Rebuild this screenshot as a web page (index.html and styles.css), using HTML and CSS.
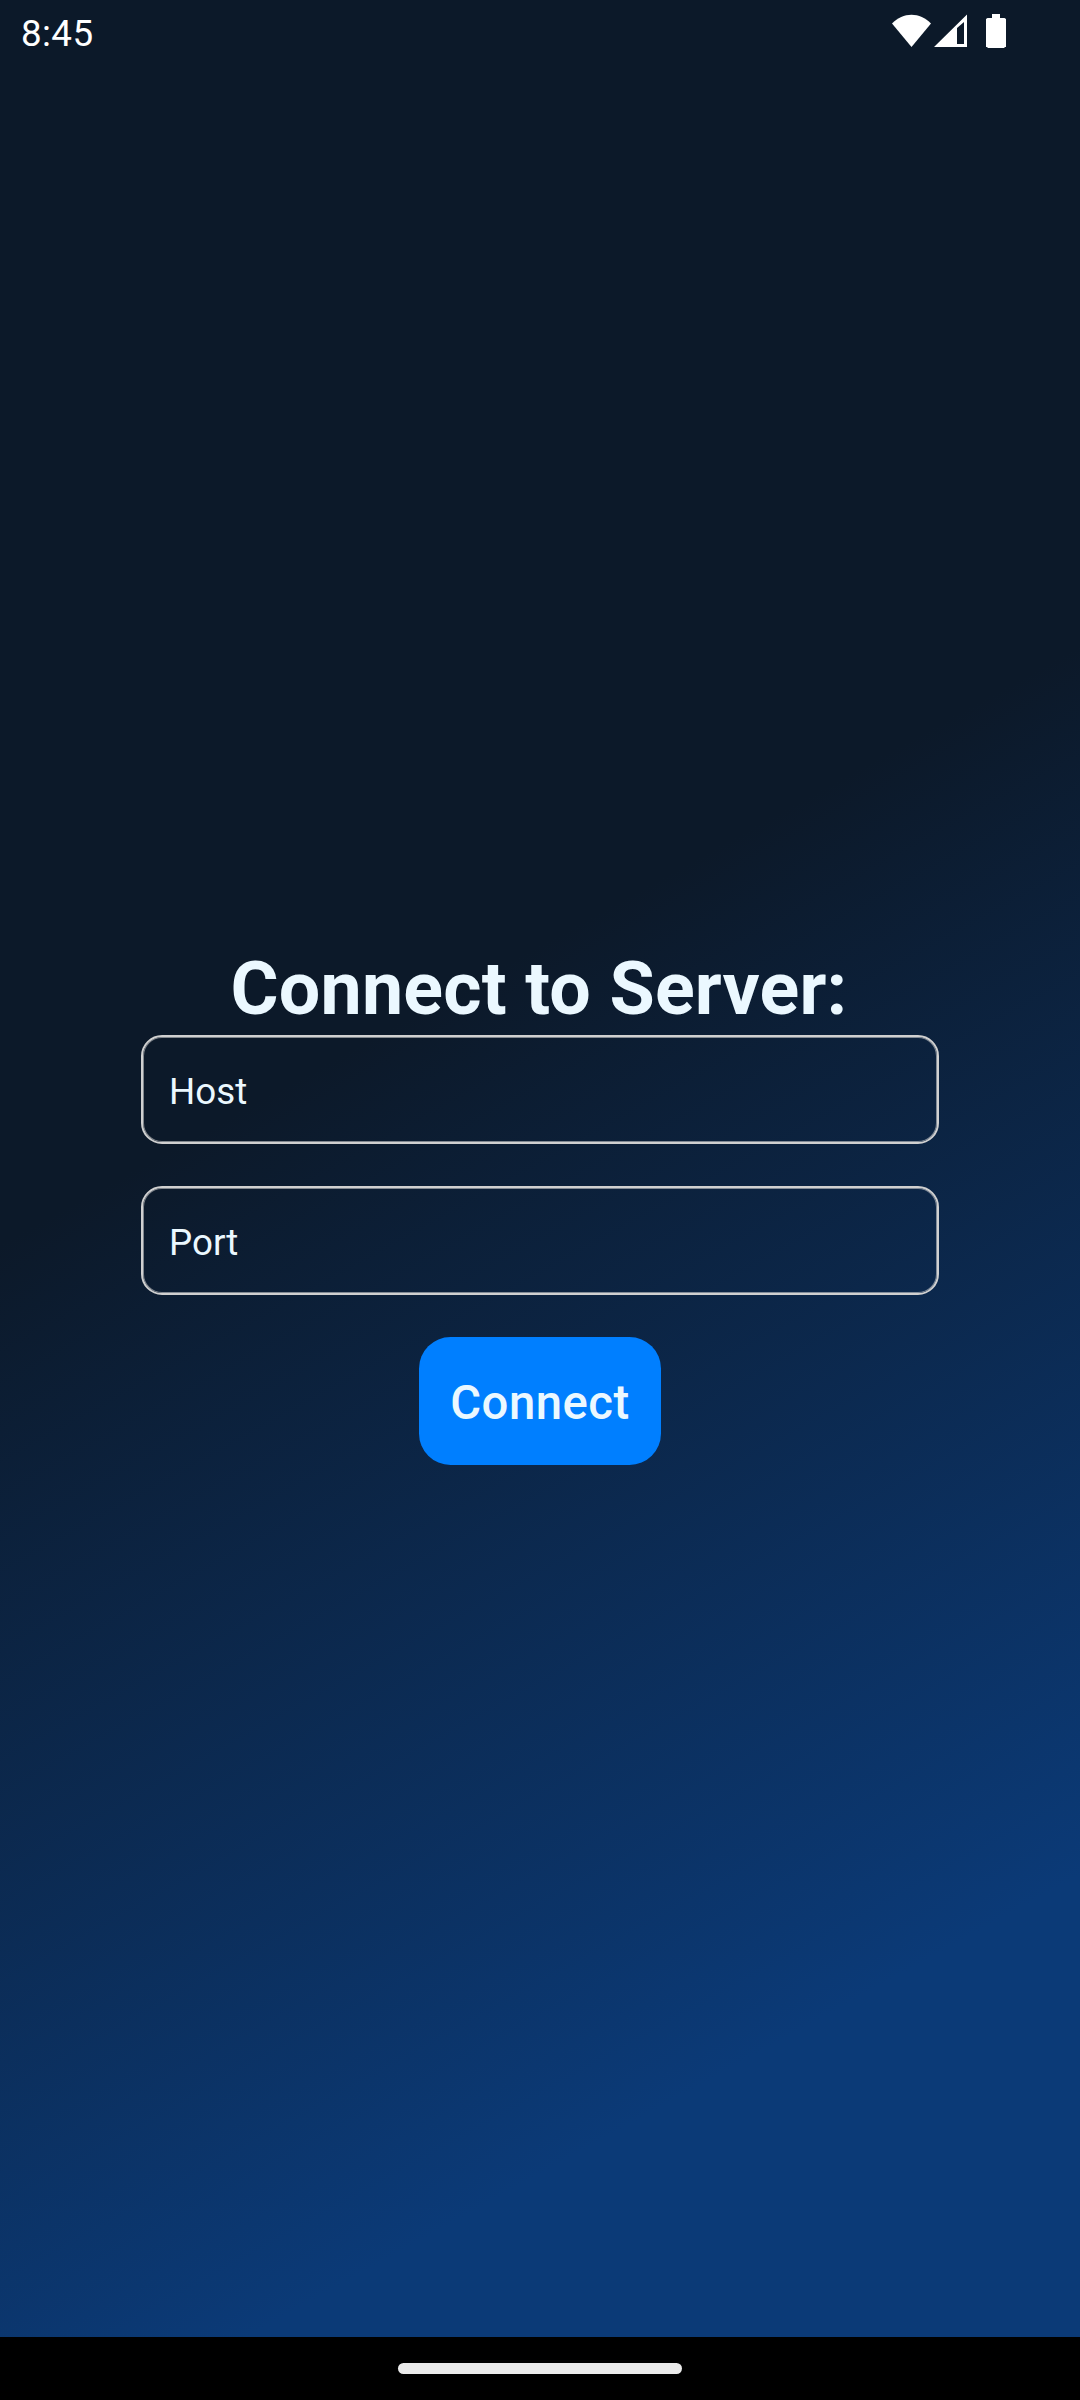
FILE: index.html
```html
<!DOCTYPE html>
<html lang="en">
<head>
<meta charset="utf-8">
<title>Connect to Server</title>
<link rel="stylesheet" href="styles.css">
</head>
<body>
<div class="screen">
  <header class="status-bar">
    <span class="clock">8:45</span>
    <svg class="status-icons" width="116" height="36" viewBox="0 0 116 36" fill="#fff" aria-hidden="true">
      <path d="M0 10.500C11 -1.200 28 -1.200 39 10.500L19.500 34Z"/>
      <path fill-rule="evenodd" d="M42 34L75 1.500V34ZM65 15V31H72V9Z"/>
      <path d="M100 1h8v4h4.500l1.500 1v28h-1.500v1h-17v-1h-1.500V6l1.500-1h4.500Z"/>
    </svg>
  </header>
  <main class="content">
    <h1 class="title">Connect to Server:</h1>
    <form class="form">
      <input class="field" type="text" placeholder="Host" aria-label="Host">
      <input class="field" type="text" placeholder="Port" aria-label="Port">
      <button class="submit" type="button">Connect</button>
    </form>
  </main>
  <footer class="nav-bar"><div class="home-pill"></div></footer>
</div>
</body>
</html>
```
FILE: styles.css
```css
* { box-sizing: border-box; }

body {
  margin: 0;
  font-family: Roboto, "Liberation Sans", sans-serif;
  color: #ebf8ff;
}

.screen {
  width: 1080px;
  height: 2400px;
  display: flex;
  flex-direction: column;
  background: linear-gradient(151deg, #0c1929 41.5%, #0b3a77 82.5%);
}

.status-bar {
  height: 63px;
  padding: 12px 72px 0 21px;
  display: flex;
  justify-content: space-between;
  align-items: flex-start;
  color: #fff;
}

.clock {
  font-size: 36.75px;
  line-height: 43px;
  letter-spacing: 0.4px;
}

.status-icons { margin-top: 1px; }

.content {
  flex: 1;
  display: flex;
  flex-direction: column;
  align-items: center;
  padding-top: 882px;
}

.title {
  margin: 0 2px 1px 0;
  font-size: 73.5px;
  line-height: 89px;
  font-weight: 700;
  letter-spacing: 0.2px;
}

.form {
  width: 798px;
  display: flex;
  flex-direction: column;
  align-items: center;
  gap: 42px;
}

.field {
  width: 100%;
  height: 109px;
  padding: 3px 24px 0 26px;
  border: 2px solid #d0d0d0;
  border-radius: 21px;
  box-shadow: inset 0 0 0 1px rgba(208, 208, 208, 0.6);
  background: transparent;
  color: inherit;
  font: 400 36.75px Roboto, "Liberation Sans", sans-serif;
}

.field::placeholder {
  color: #ebf8ff;
  opacity: 1;
}

.submit {
  height: 128px;
  padding: 3px 31.5px 0;
  border: 0;
  border-radius: 31.5px;
  background: #007fff;
  color: #ebf8ff;
  font: 500 47.25px Roboto, "Liberation Sans", sans-serif;
  letter-spacing: 0.5px;
}

.nav-bar {
  height: 63px;
  display: flex;
  align-items: center;
  justify-content: center;
  background: #000;
}

.home-pill {
  width: 284px;
  height: 11px;
  border-radius: 6px;
  background: #ebebeb;
}
```
